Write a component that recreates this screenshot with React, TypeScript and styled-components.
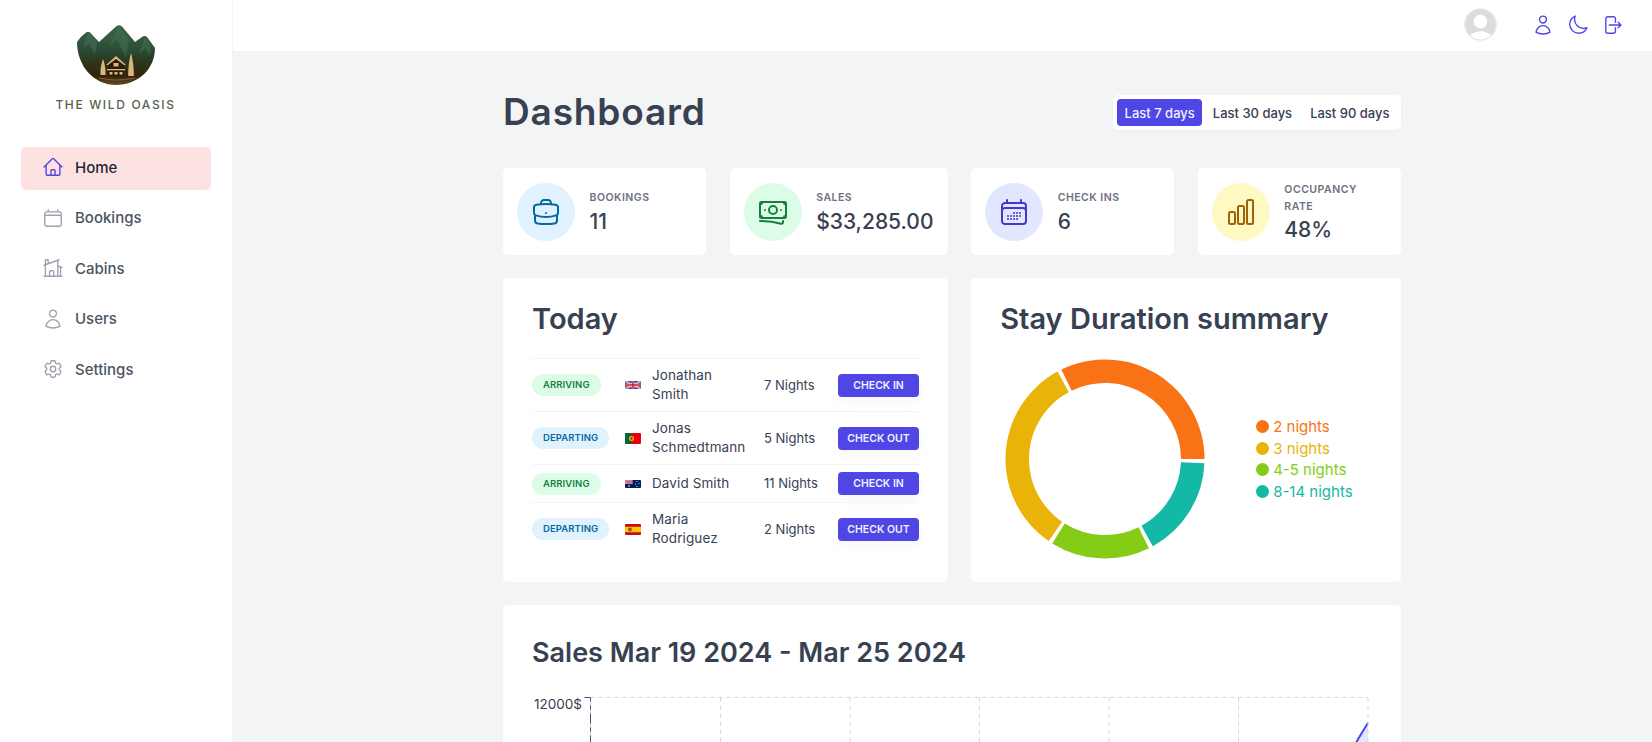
import React from "react";
import styled, { createGlobalStyle } from "styled-components";
import {
  HiOutlineHome,
  HiOutlineCalendar,
  HiOutlineHomeModern,
  HiOutlineUser,
  HiOutlineCog6Tooth,
  HiOutlineMoon,
  HiOutlineArrowRightOnRectangle,
  HiOutlineBriefcase,
  HiOutlineBanknotes,
  HiOutlineCalendarDays,
  HiOutlineChartBar,
} from "react-icons/hi2";

const GlobalStyle = createGlobalStyle`
  * { box-sizing: border-box; }
  html, body { margin: 0; height: 100%; overflow: hidden; }
  body { font-family: Inter, "Noto Sans", "Liberation Sans", sans-serif; color: #374151; background: #f3f4f6; }
  #root { height: 100%; }
`;

const Layout = styled.div`
  display: grid;
  grid-template-columns: 232px 1fr;
  grid-template-rows: 51px 1fr;
  height: 742px;
  overflow: hidden;
`;

const Sidebar = styled.aside`
  grid-row: 1 / -1;
  background: #fff;
  border-right: 1px solid #f3f4f6;
  padding: 24px 21px;
  display: flex;
  flex-direction: column;
  width: 233px;
`;

const Brand = styled.div`
  display: flex;
  flex-direction: column;
  align-items: center;
  gap: 11px;
  margin-bottom: 34px;
  padding-right: 1px;
`;

const BrandName = styled.div`
  font-size: 12px;
  font-weight: 500;
  letter-spacing: 1.65px;
  color: #55634c;
  line-height: 16px;
  white-space: nowrap;
`;

const Nav = styled.nav`
  display: flex;
  flex-direction: column;
  gap: 7.5px;
`;

const NavItem = styled.a<{ $active?: boolean }>`
  display: flex;
  align-items: center;
  gap: 11px;
  height: 43px;
  padding: 0 0 3px 21px;
  border-radius: 5px;
  font-size: 15px;
  font-weight: 500;
  background: ${(p) => (p.$active ? "#fee2e2" : "transparent")};
  color: ${(p) => (p.$active ? "#1f2937" : "#4b5563")};
  svg {
    width: 22px;
    height: 22px;
    color: ${(p) => (p.$active ? "#4f46e5" : "#9ca3af")};
  }
`;

const Header = styled.header`
  background: #fff;
  display: flex;
  align-items: center;
  justify-content: flex-end;
  padding: 0 23px 2px 0;
  gap: 29px;
  margin-left: 1px;
`;

const Avatar = styled.svg`
  width: 33px;
  height: 33px;
  display: block;
`;

const HeaderMenu = styled.div`
  display: flex;
  gap: 0.5px;
`;

const IconButton = styled.button`
  width: 34px;
  height: 34px;
  border: 0;
  background: none;
  padding: 6px;
  color: #4f46e5;
  svg {
    width: 22px;
    height: 22px;
    display: block;
  }
`;

const Main = styled.main`
  overflow: hidden;
  padding: 36px 0 0 271px;
`;

const Content = styled.div`
  width: 898px;
  display: flex;
  flex-direction: column;
  gap: 31px;
`;

const TopRow = styled.div`
  display: flex;
  align-items: center;
  justify-content: space-between;
  height: 50px;
`;

const PageTitle = styled.h1`
  margin: 0 0 2px;
  font-size: 37px;
  font-weight: 600;
  letter-spacing: 0.85px;
  color: #374151;
`;

const Filter = styled.div`
  display: flex;
  gap: 3px;
  padding: 4px;
  margin-top: 1px;
  background: #fff;
  border-radius: 5px;
  box-shadow: 0 1px 2px rgba(0, 0, 0, 0.04);
`;

const FilterButton = styled.button<{ $active?: boolean }>`
  border: 0;
  font: inherit;
  font-size: 13px;
  font-weight: 500;
  height: 27px;
  padding: 0 7.5px;
  border-radius: 4px;
  white-space: nowrap;
  background: ${(p) => (p.$active ? "#4f46e5" : "transparent")};
  color: ${(p) => (p.$active ? "#eef2ff" : "#374151")};
`;

const Grid = styled.div`
  display: grid;
  grid-template-columns: 1fr 218px 1fr 1fr;
  column-gap: 23.5px;
  row-gap: 23px;
`;

const StatCard = styled.div`
  background: #fff;
  border-radius: 5px;
  height: 87px;
  padding: 0 14px;
  display: flex;
  align-items: center;
  gap: 14.5px;
`;

const StatIcon = styled.div<{ $bg: string; $fg: string }>`
  width: 58px;
  height: 58px;
  flex: none;
  border-radius: 50%;
  background: ${(p) => p.$bg};
  color: ${(p) => p.$fg};
  display: flex;
  align-items: center;
  justify-content: center;
  svg {
    width: 32px;
    height: 32px;
  }
`;

const StatText = styled.div`
  display: flex;
  flex-direction: column;
  min-width: 0;
  padding-top: 3px;
`;

const StatLabel = styled.div`
  font-size: 10.5px;
  font-weight: 600;
  letter-spacing: 0.5px;
  line-height: 16.5px;
  text-transform: uppercase;
  color: #6b7280;
`;

const StatValue = styled.div`
  font-size: 21px;
  font-weight: 500;
  line-height: 29px;
  color: #374151;
  white-space: nowrap;
`;

const Panel = styled.section<{ $wide?: boolean }>`
  grid-column: ${(p) => (p.$wide ? "1 / -1" : "span 2")};
  background: #fff;
  border-radius: 5px;
  padding: 21px 29px 28px;
  height: ${(p) => (p.$wide ? "auto" : "304px")};
`;

const SalesPanel = styled(Panel)`
  padding-top: 28px;
`;

const PanelTitle = styled.h2`
  margin: 0;
  font-size: 29px;
  font-weight: 600;
  line-height: 39px;
  color: #374151;
  white-space: nowrap;
`;

const SalesTitle = styled(PanelTitle)`
  font-size: 27px;
`;

const Rows = styled.div`
  margin-top: 20px;
  display: flex;
  flex-direction: column;
`;

const Row = styled.div`
  display: grid;
  grid-template-columns: 93px 27px 112px 74px 81px;
  align-items: center;
  border-top: 1px solid #f3f4f6;
  padding: 7px 0;
  font-size: 13px;
  line-height: 19px;
  font-weight: 400;
  color: #374151;
`;

const Tag = styled.span<{ $kind: "arriving" | "departing" }>`
  justify-self: start;
  display: inline-block;
  height: 22px;
  line-height: 22px;
  padding: 0 11px;
  border-radius: 100px;
  font-size: 9.5px;
  font-weight: 600;
  letter-spacing: 0.1px;
  background: ${(p) => (p.$kind === "arriving" ? "#dcfce7" : "#e0f2fe")};
  color: ${(p) => (p.$kind === "arriving" ? "#15803d" : "#0369a1")};
`;

const FlagWrap = styled.svg`
  width: 16px;
  display: block;
  border-radius: 1px;
`;

const Guest = styled.div`
  padding-right: 26px;
  font-size: 13.5px;
  letter-spacing: 0.1px;
`;

const CheckButton = styled.button`
  height: 23px;
  width: 81px;
  border: 0;
  border-radius: 4px;
  background: #4f46e5;
  color: #eef2ff;
  font: inherit;
  font-size: 10.5px;
  font-weight: 600;
  white-space: nowrap;
  box-shadow: 0 6px 12px rgba(0, 0, 0, 0.03);
`;

const DonutRow = styled.div`
  display: flex;
  align-items: center;
  margin-top: 21px;
  margin-left: 5px;
  gap: 51px;
`;

const DonutSvg = styled.svg`
  width: 200px;
  height: 200px;
  flex: none;
  display: block;
`;

const Legend = styled.ul`
  list-style: none;
  margin: 0;
  padding: 0;
  display: flex;
  flex-direction: column;
`;

const LegendItem = styled.li<{ $color: string }>`
  display: flex;
  align-items: center;
  gap: 4px;
  height: 21.8px;
  font-size: 15px;
  color: ${(p) => p.$color};
  white-space: nowrap;
  &::before {
    content: "";
    width: 13px;
    height: 13px;
    border-radius: 50%;
    background: ${(p) => p.$color};
  }
`;

const ChartSvg = styled.svg`
  display: block;
  margin-top: 24px;
  width: 842px;
  height: 300px;
`;

const Flag = ({ code }: { code: string }) => {
  if (code === "gb")
    return (
      <FlagWrap viewBox="0 0 32 16" style={{ height: 8 }}>
        <rect width="32" height="16" fill="#2b3f8a" />
        <path d="M0 0l32 16M32 0L0 16" stroke="#fff" strokeWidth="3.5" />
        <path d="M0 0l32 16M32 0L0 16" stroke="#c8102e" strokeWidth="1.2" />
        <path d="M16 0v16M0 8h32" stroke="#fff" strokeWidth="5" />
        <path d="M16 0v16M0 8h32" stroke="#c8102e" strokeWidth="3" />
      </FlagWrap>
    );
  if (code === "pt")
    return (
      <FlagWrap viewBox="0 0 32 22" style={{ height: 11 }}>
        <rect width="32" height="22" fill="#e8000f" />
        <rect width="13" height="22" fill="#046a38" />
        <circle cx="13" cy="11" r="5" fill="#f2c200" />
        <circle cx="13" cy="11" r="2.4" fill="#d0021b" />
      </FlagWrap>
    );
  if (code === "au")
    return (
      <FlagWrap viewBox="0 0 32 16" style={{ height: 8 }}>
        <rect width="32" height="16" fill="#00205b" />
        <rect width="15" height="8" fill="#b9b3cf" />
        <path d="M0 0l15 8M15 0L0 8" stroke="#d9455a" strokeWidth="1.5" />
        <path d="M7.5 0v8M0 4h15" stroke="#e2576b" strokeWidth="1.8" />
        <circle cx="8" cy="12" r="1.6" fill="#fff" />
        <circle cx="24" cy="3" r="1" fill="#fff" />
        <circle cx="28" cy="7" r="1" fill="#fff" />
        <circle cx="21" cy="8" r="1" fill="#fff" />
        <circle cx="24" cy="13" r="1.2" fill="#fff" />
      </FlagWrap>
    );
  return (
    <FlagWrap viewBox="0 0 32 22" style={{ height: 11 }}>
      <rect width="32" height="22" fill="#c60b1e" />
      <rect y="5.5" width="32" height="11" fill="#ffc400" />
      <rect x="7" y="7.5" width="6" height="7" rx="1" fill="#8f4a1a" />
    </FlagWrap>
  );
};

const Logo = () => (
  <svg width="78" height="62" viewBox="0 0 78 62" style={{ display: "block" }}>
    <defs>
      <linearGradient id="logoFill" x1="0" y1="0" x2="0" y2="1">
        <stop offset="0" stopColor="#3a6549" />
        <stop offset="0.4" stopColor="#2d4d37" />
        <stop offset="0.58" stopColor="#2a3a20" />
        <stop offset="0.85" stopColor="#33240e" />
        <stop offset="1" stopColor="#6b4a22" />
      </linearGradient>
    </defs>
    <path
      d="M0 18 Q4 12 9 8.5 Q11 7 13 8.5 L22 18 L39 2.5 Q42 0 45 2.5 L58 18 L65 13 Q68 11 70 13 L78 24 C78 46 60 61 39 61 C17 61 0 42 0 18Z"
      fill="url(#logoFill)"
    />
    <path d="M11 8 L6 24 L12 19 L18 31 L20 17Z M42 2 L32 22 L40 15 L49 34 L52 15Z M68 13 L62 30 L68 24 L73 32 L74 21Z" fill="#4c7a5d" opacity="0.4" />
    <path d="M26 35 C24 40 23.2 47 23.5 51 L28.5 51 C28.8 47 28 40 26 35Z" fill="#d9b67c" />
    <path d="M54 29 C52 36 51 46 51.2 52 L56.8 52 C57 46 56 36 54 29Z" fill="#d9b67c" />
    <path d="M39 33 L47 41 L47 52 L31 52 L31 41Z" fill="#2a1b0a" />
    <path d="M39 32 L49 41 L47 41 L39 35 L31 41 L29 41Z" fill="#d9b67c" />
    <rect x="36.5" y="39" width="5" height="3.5" fill="#d9b67c" />
    <rect x="30" y="45" width="18" height="1.3" fill="#d9b67c" />
    <rect x="32.5" y="48" width="3" height="2.6" fill="#d9b67c" />
    <rect x="37.5" y="48" width="3" height="2.6" fill="#d9b67c" />
    <rect x="42.5" y="48" width="3" height="2.6" fill="#d9b67c" />
    <path d="M22 54 Q39 58 58 54" stroke="#8a6a3a" strokeWidth="0.8" fill="none" />
  </svg>
);

const arcPath = (start: number, end: number, R = 99.5, r = 76, cx = 100, cy = 100) => {
  const rad = (a: number) => (a * Math.PI) / 180;
  const p = (rr: number, a: number) => `${(cx + rr * Math.cos(rad(a))).toFixed(2)} ${(cy - rr * Math.sin(rad(a))).toFixed(2)}`;
  const large = end - start > 180 ? 1 : 0;
  return `M${p(R, start)} A${R} ${R} 0 ${large} 0 ${p(R, end)} L${p(r, end)} A${r} ${r} 0 ${large} 1 ${p(r, start)}Z`;
};

const slices = [
  { label: "2 nights", color: "#f97316", from: 0, to: 116 },
  { label: "3 nights", color: "#eab308", from: 118.5, to: 235.6 },
  { label: "4-5 nights", color: "#84cc16", from: 238, to: 296.2 },
  { label: "8-14 nights", color: "#14b8a6", from: 298.7, to: 357.6 },
];

const stats = [
  { label: "Bookings", value: "11", bg: "#e0f2fe", fg: "#0369a1", icon: <HiOutlineBriefcase /> },
  { label: "Sales", value: "$33,285.00", bg: "#dcfce7", fg: "#15803d", icon: <HiOutlineBanknotes /> },
  { label: "Check ins", value: "6", bg: "#e0e7ff", fg: "#4338ca", icon: <HiOutlineCalendarDays /> },
  { label: "Occupancy rate", value: "48%", bg: "#fef9c3", fg: "#a16207", icon: <HiOutlineChartBar /> },
];

const today: { kind: "arriving" | "departing"; flag: string; name: string; nights: string; action: string }[] = [
  { kind: "arriving", flag: "gb", name: "Jonathan Smith", nights: "7 Nights", action: "CHECK IN" },
  { kind: "departing", flag: "pt", name: "Jonas Schmedtmann", nights: "5 Nights", action: "CHECK OUT" },
  { kind: "arriving", flag: "au", name: "David Smith", nights: "11 Nights", action: "CHECK IN" },
  { kind: "departing", flag: "es", name: "Maria Rodriguez", nights: "2 Nights", action: "CHECK OUT" },
];

const gridX = [188.5, 318, 447.5, 577, 706.5, 836];

export default function App() {
  return (
    <>
      <GlobalStyle />
      <Layout>
        <Sidebar>
          <Brand>
            <Logo />
            <BrandName>THE WILD OASIS</BrandName>
          </Brand>
          <Nav>
            <NavItem $active><HiOutlineHome />Home</NavItem>
            <NavItem><HiOutlineCalendar />Bookings</NavItem>
            <NavItem><HiOutlineHomeModern />Cabins</NavItem>
            <NavItem><HiOutlineUser />Users</NavItem>
            <NavItem><HiOutlineCog6Tooth />Settings</NavItem>
          </Nav>
        </Sidebar>
        <Header>
          <Avatar viewBox="0 0 34 34">
            <circle cx="17" cy="17" r="16.5" fill="#dcdcdc" stroke="#eeeeee" />
            <circle cx="17" cy="14" r="7" fill="#fff" />
            <path d="M6 28 Q17 20 28 28 Q17 37 6 28Z" fill="#fff" />
          </Avatar>
          <HeaderMenu>
            <IconButton><HiOutlineUser /></IconButton>
            <IconButton><HiOutlineMoon /></IconButton>
            <IconButton><HiOutlineArrowRightOnRectangle /></IconButton>
          </HeaderMenu>
        </Header>
        <Main>
          <Content>
            <TopRow>
              <PageTitle>Dashboard</PageTitle>
              <Filter>
                <FilterButton $active>Last 7 days</FilterButton>
                <FilterButton>Last 30 days</FilterButton>
                <FilterButton>Last 90 days</FilterButton>
              </Filter>
            </TopRow>
            <Grid>
              {stats.map((s) => (
                <StatCard key={s.label}>
                  <StatIcon $bg={s.bg} $fg={s.fg}>{s.icon}</StatIcon>
                  <StatText>
                    <StatLabel>{s.label}</StatLabel>
                    <StatValue>{s.value}</StatValue>
                  </StatText>
                </StatCard>
              ))}
              <Panel>
                <PanelTitle>Today</PanelTitle>
                <Rows>
                  {today.map((t) => (
                    <Row key={t.name}>
                      <Tag $kind={t.kind}>{t.kind.toUpperCase()}</Tag>
                      <Flag code={t.flag} />
                      <Guest>{t.name}</Guest>
                      <div>{t.nights}</div>
                      <CheckButton>{t.action}</CheckButton>
                    </Row>
                  ))}
                </Rows>
              </Panel>
              <Panel>
                <PanelTitle>Stay Duration summary</PanelTitle>
                <DonutRow>
                  <DonutSvg viewBox="0 0 200 200">
                    {slices.map((s) => (
                      <path key={s.label} d={arcPath(s.from, s.to)} fill={s.color} />
                    ))}
                  </DonutSvg>
                  <Legend>
                    {slices.map((s) => (
                      <LegendItem key={s.label} $color={s.color}>{s.label}</LegendItem>
                    ))}
                  </Legend>
                </DonutRow>
              </Panel>
              <SalesPanel $wide>
                <SalesTitle>Sales Mar 19 2024 - Mar 25 2024</SalesTitle>
                <ChartSvg viewBox="0 0 842 300">
                  <path d="M836 26.7 L836 300 L700 300 L815 65Z" fill="#e0e7ff" />
                  <path d="M815 65 L825 45 L836 26.7" stroke="#4f46e5" strokeWidth="2" fill="none" />
                  <g stroke="#d1d5db" strokeDasharray="4 4" strokeWidth="1" fill="none">
                    <path d="M58.5 1.5 H836" />
                    {gridX.map((x) => (
                      <path key={x} d={`M${x} 1.5 V300`} />
                    ))}
                  </g>
                  <path d="M52.5 1.5 H58.5 V300" stroke="#d1d5db" strokeWidth="1" fill="none" />
                  <path d="M52.5 1.5 H58.5 V300" stroke="#4b5563" strokeWidth="1" strokeDasharray="10 4 4 4" fill="none" />
                  <text x="50" y="13" textAnchor="end" fontSize="13.5" fill="#374151" fontFamily="Inter, sans-serif">12000$</text>
                </ChartSvg>
              </SalesPanel>
            </Grid>
          </Content>
        </Main>
      </Layout>
    </>
  );
}
